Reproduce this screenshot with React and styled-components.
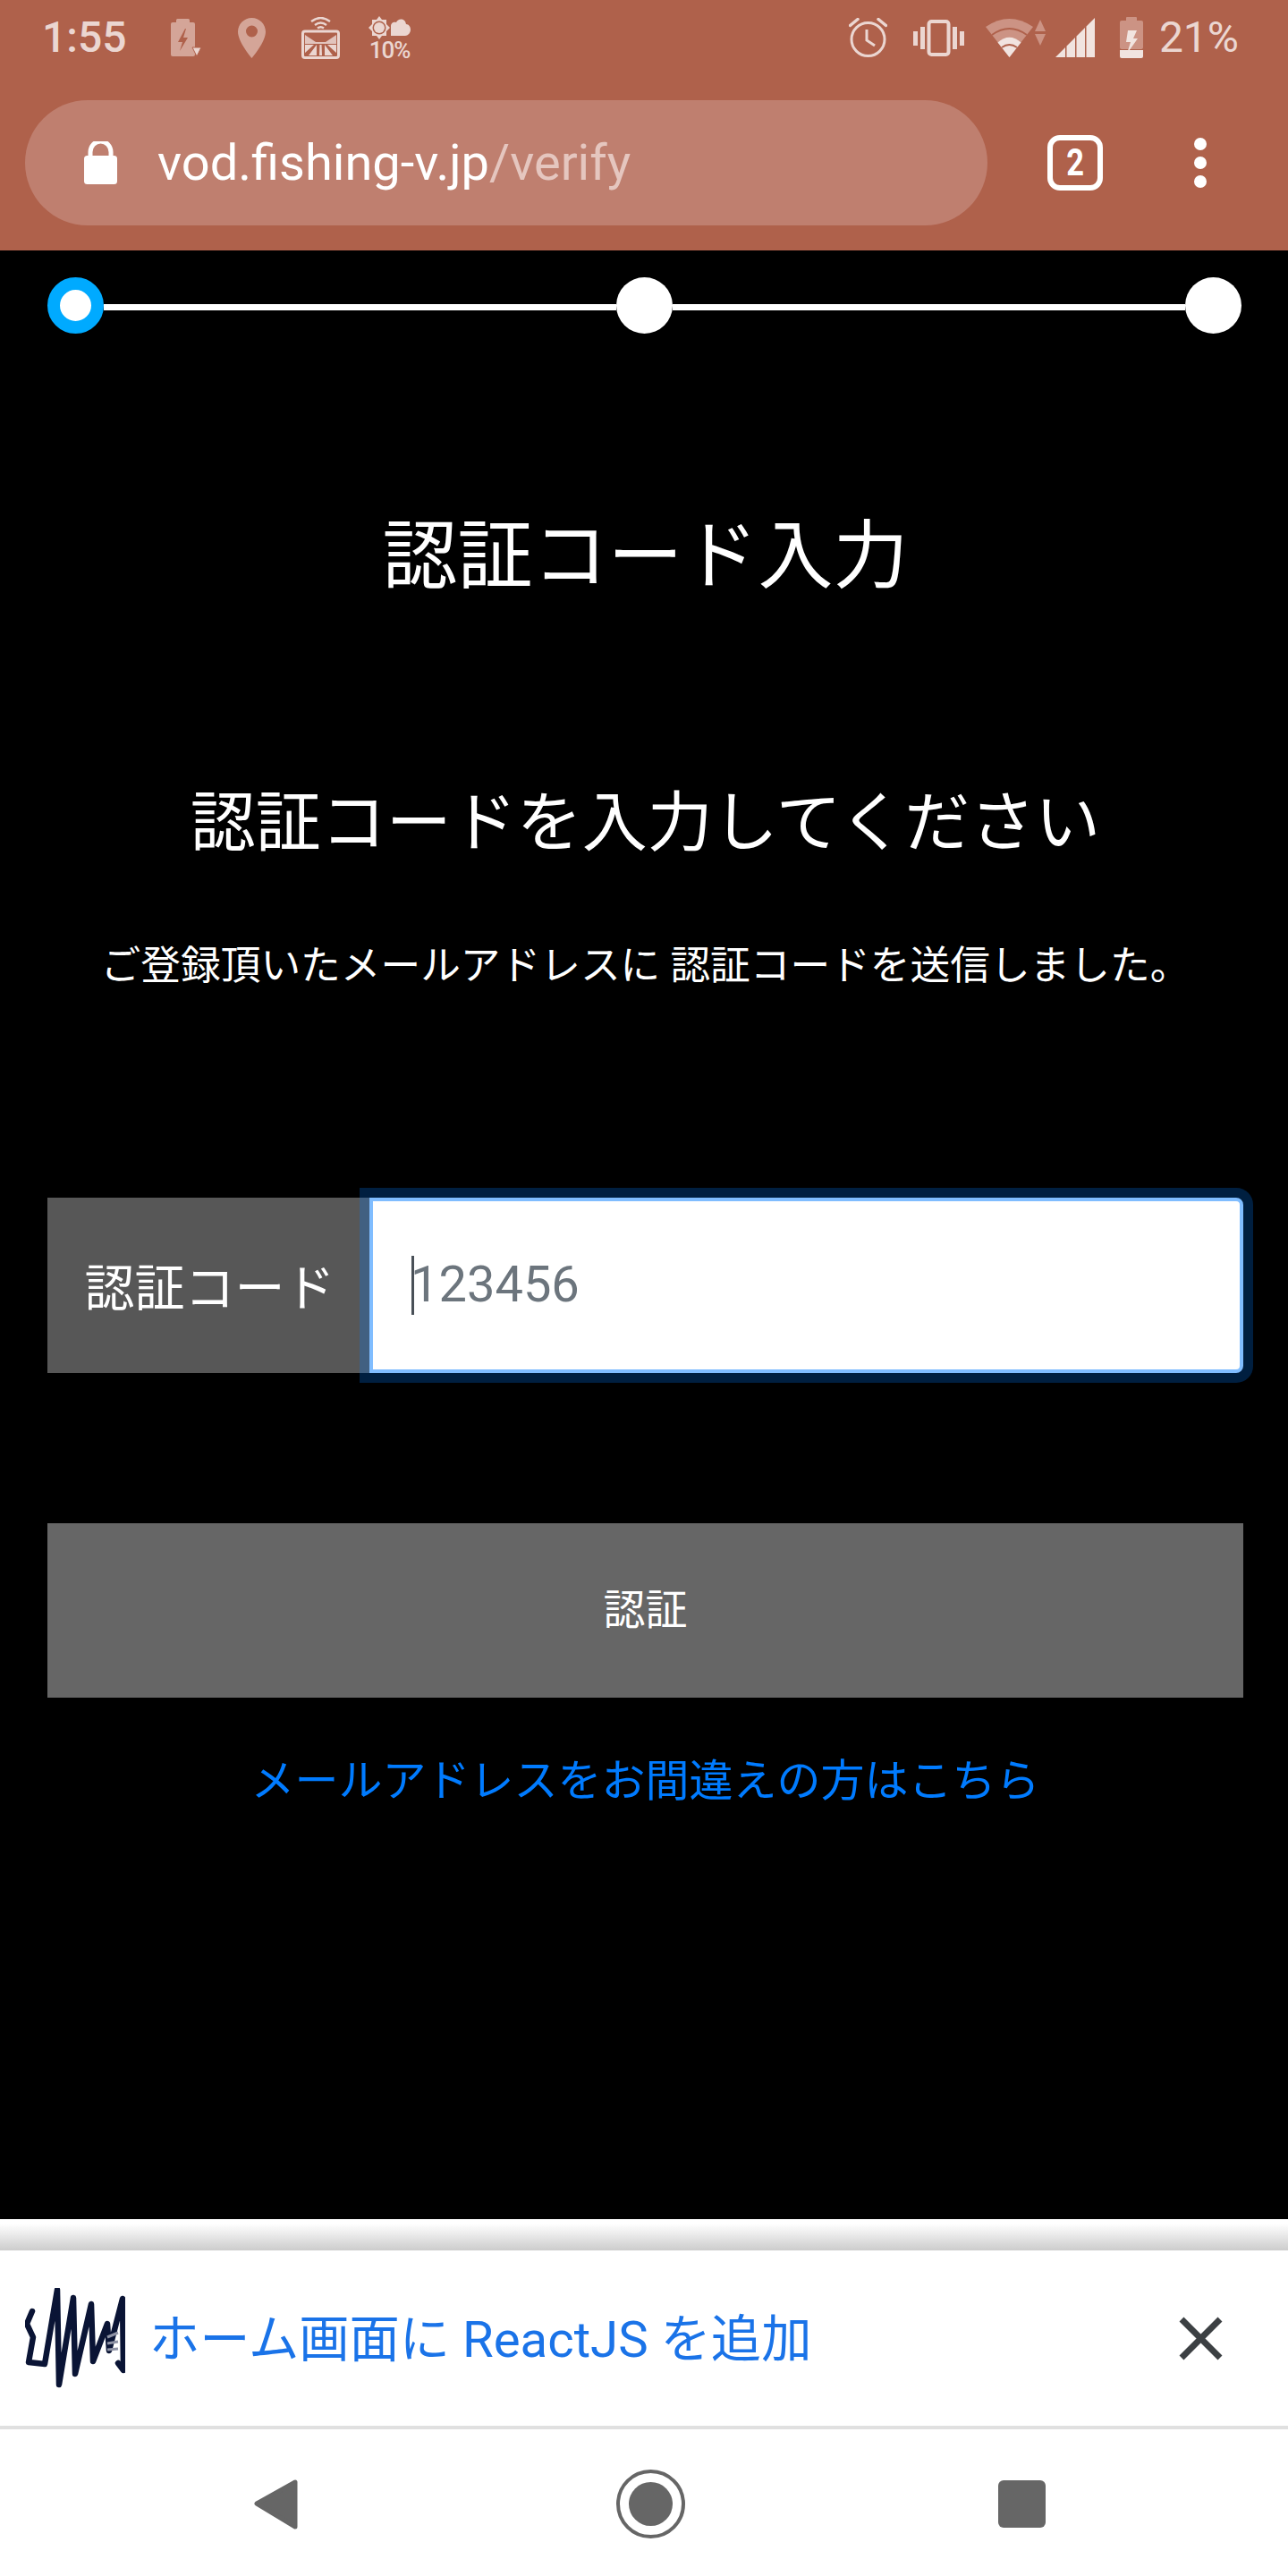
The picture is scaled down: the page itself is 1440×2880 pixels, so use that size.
import React from "react";
import styled, { createGlobalStyle } from "styled-components";

const GlobalStyle = createGlobalStyle`
  html, body {
    margin: 0;
    padding: 0;
    background: #000;
  }
  * {
    box-sizing: border-box;
  }
`;

const CJK = `"Roboto", "Noto Sans CJK JP", sans-serif`;

const Page = styled.div`
  width: 1440px;
  height: 2880px;
  display: flex;
  flex-direction: column;
  font-family: ${CJK};
  overflow: hidden;
`;

const Chrome = styled.header`
  height: 280px;
  background: #af614b;
`;

const StatusBar = styled.div`
  height: 84px;
  padding: 0 55px 0 47px;
  display: flex;
  align-items: center;
  color: #ebd6d1;
`;

const Clock = styled.span`
  font-size: 48px;
  font-weight: 500;
  line-height: 1;
  width: 92px;
  margin-right: 52px;
`;

const StatusIcon = styled.svg`
  display: block;
  flex: none;
  margin-left: ${(p) => p.$left || 0}px;
`;

const Weather = styled.div`
  width: 47px;
  margin-left: 32px;
  display: flex;
  flex-direction: column;
  align-items: center;
  margin-top: 2px;
`;

const WeatherLabel = styled.span`
  font-size: 26px;
  font-weight: 500;
  line-height: 24px;
  letter-spacing: -1px;
`;

const StatusRight = styled.div`
  margin-left: auto;
  display: flex;
  align-items: center;
`;

const Percent = styled.span`
  font-size: 48px;
  line-height: 1;
  margin-left: 18px;
`;

const Toolbar = styled.div`
  height: 196px;
  padding: 28px 0 28px 28px;
  display: flex;
  align-items: center;
`;

const UrlPill = styled.div`
  width: 1076px;
  height: 140px;
  flex: none;
  border-radius: 70px;
  background: #bf7f6f;
  padding-left: 66px;
  display: flex;
  align-items: center;
  gap: 45px;
`;

const UrlText = styled.span`
  font-size: 56px;
  line-height: 1;
  color: #fff;
  white-space: nowrap;
`;

const UrlPath = styled.span`
  color: #e5c6bf;
`;

const TabCount = styled.div`
  width: 62px;
  height: 62px;
  margin-left: 67px;
  border: 6px solid #fff;
  border-radius: 14px;
  color: #fff;
  display: flex;
  align-items: center;
  justify-content: center;
`;

const TabDigit = styled.span`
  font-size: 42px;
  font-weight: 700;
  line-height: 1;
  transform: scaleX(0.82);
`;

const Menu = styled.div`
  margin-left: 102px;
  display: flex;
  flex-direction: column;
  gap: 7px;
`;

const MenuDot = styled.span`
  width: 14px;
  height: 14px;
  border-radius: 50%;
  background: #fff;
`;

const Main = styled.main`
  flex: 1;
  background: #000;
  color: #fff;
  padding: 30px 50px 0 53px;
  text-align: center;
`;

const Steps = styled.div`
  display: flex;
  align-items: center;
  margin-right: 2px;
`;

const StepDot = styled.span`
  width: 63px;
  height: 63px;
  flex: none;
  border-radius: 50%;
  background: #fff;
  border: ${(p) => (p.$active ? "14px solid #00aaff" : "none")};
`;

const StepLine = styled.span`
  flex: 1;
  height: 7px;
  margin-top: 4px;
  background: #fff;
`;

const Title = styled.h1`
  margin: 200px 0 0;
  font-size: 84px;
  font-weight: 400;
  line-height: 100px;
`;

const SubTitle = styled.h2`
  margin: 197px 0 0;
  font-size: 73px;
  font-weight: 400;
  line-height: 100px;
`;

const Note = styled.p`
  margin: 80px 0 0;
  font-size: 44.7px;
  line-height: 60px;
  white-space: nowrap;
`;

const InputGroup = styled.div`
  margin-top: 229px;
  height: 196px;
  display: flex;
`;

const InputLabel = styled.label`
  width: 360px;
  flex: none;
  background: #575757;
  font-size: 56px;
  padding: 0 0 4px 3px;
  display: flex;
  align-items: center;
  justify-content: center;
`;

const InputWrap = styled.div`
  position: relative;
  flex: 1;
`;

const CodeInput = styled.input`
  width: 100%;
  height: 100%;
  border: 4px solid #80bdff;
  border-radius: 0 8px 8px 0;
  box-shadow: 0 0 0 11px rgba(0, 123, 255, 0.25);
  outline: none;
  background: #fff;
  padding: 0 0 2px 42px;
  font-family: "Roboto", sans-serif;
  font-size: 56px;
  color: #495057;
  caret-color: transparent;

  &::placeholder {
    color: #6c757d;
    opacity: 1;
  }
`;

const Caret = styled.span`
  position: absolute;
  left: 47px;
  top: 65px;
  width: 3px;
  height: 66px;
  background: #495057;
`;

const SubmitButton = styled.button`
  display: block;
  width: 100%;
  height: 195px;
  margin-top: 168px;
  padding: 0 0 11px;
  border: none;
  background: #666;
  color: #fff;
  font-family: ${CJK};
  font-size: 47px;
`;

const HelpLink = styled.a`
  display: block;
  margin-top: 64px;
  font-size: 49px;
  line-height: 60px;
  color: #007bff;
  text-decoration: none;
`;

const Fade = styled.div`
  height: 35px;
  background: linear-gradient(#fff 15%, #ccc);
`;

const InstallBanner = styled.div`
  height: 196px;
  background: #fff;
  padding: 0 73px 0 28px;
  display: flex;
  align-items: center;
  gap: 27px;
`;

const InstallText = styled.span`
  flex: 1;
  padding-top: 4px;
  font-size: 56.3px;
  line-height: 1;
  color: #1a73e8;
  white-space: nowrap;
`;

const Divider = styled.div`
  height: 4px;
  background: #e0e0e0;
`;

const NavBar = styled.nav`
  height: 164px;
  background: #fff;
  padding: 3px 0 0 284px;
  display: flex;
  align-items: center;
`;

const HomeRing = styled.div`
  width: 77px;
  height: 77px;
  margin-left: 356px;
  margin-right: 350px;
  border: 4px solid #666;
  border-radius: 50%;
  display: flex;
  align-items: center;
  justify-content: center;
`;

const HomeDot = styled.span`
  width: 49px;
  height: 49px;
  border-radius: 50%;
  background: #666;
`;

const RecentSquare = styled.span`
  width: 53px;
  height: 53px;
  border-radius: 6px;
  background: #666;
`;

const LIGHT = "#ebd6d1";
const DIM = "#d4a598";
const DIMMER = "#cc9384";
const BG = "#af614b";

const ChargingIcon = () => (
  <StatusIcon width="34" height="42" viewBox="0 0 34 42">
    <rect x="6" y="0" width="15" height="6" rx="1.5" fill={DIM} />
    <rect x="0" y="4" width="27" height="38" rx="2" fill={DIM} />
    <path d="M16 11 L8 26 H13 L10 36 L19 21 H14 L17 11z" fill={BG} />
    <path d="M24 32 H34 L29 42z" fill={LIGHT} stroke={BG} strokeWidth="1" />
  </StatusIcon>
);

const PinIcon = () => (
  <StatusIcon $left={41} width="31" height="45" viewBox="0 0 31 45">
    <path
      fillRule="evenodd"
      d="M15.5 0C7 0 0 7 0 15.5C0 27 15.5 45 15.5 45S31 27 31 15.5C31 7 24 0 15.5 0zM15.5 8.5a6.5 6.5 0 1 1 0 13a6.5 6.5 0 1 1 0-13z"
      fill={DIM}
    />
  </StatusIcon>
);

const RoadIcon = () => (
  <StatusIcon $left={40} width="43" height="47" viewBox="0 0 43 47">
    <path d="M11 5 Q21.5 -3 32 5" fill="none" stroke={LIGHT} strokeWidth="2.4" />
    <path d="M15 9 Q21.5 4 28 9" fill="none" stroke={LIGHT} strokeWidth="2.4" />
    <path d="M18 12.5 Q21.5 10 25 12.5" fill="none" stroke={LIGHT} strokeWidth="2.4" />
    <rect x="1.5" y="16" width="40" height="29.5" rx="2.5" fill={BG} stroke={LIGHT} strokeWidth="3" />
    <path d="M4 20 L16 28 H27 L39 20 V30 H4z" fill={LIGHT} opacity="0.85" />
    <path d="M4 31 H14 L4 40z M39 31 H29 L39 40z" fill={LIGHT} />
    <path d="M17 31 L8 43 H17z M26 31 L35 43 H26z M20.5 31 H22.5 L23 43 H20z" fill={LIGHT} />
  </StatusIcon>
);

const WeatherIcon = () => (
  <svg width="47" height="26" viewBox="0 0 47 26">
    <path
      d="M12 0 L15 4 L20 4 L20 9 L24 13 L20 17 L20 22 L15 22 L12 26 L9 22 L4 22 L4 17 L0 13 L4 9 L4 4 L9 4z"
      fill={LIGHT}
    />
    <circle cx="12" cy="13" r="7.5" fill={BG} />
    <circle cx="12" cy="13" r="6" fill={LIGHT} />
    <path
      d="M25 22 V11 C25 7 29 6 31 7 C33 2 41 2 42 9 C45 9 47 12 47 15 C47 19 44 22 41 22z"
      fill={LIGHT}
    />
  </svg>
);

const AlarmIcon = () => (
  <StatusIcon width="43" height="44" viewBox="0 0 43 44">
    <circle cx="21.5" cy="24" r="18.5" fill="none" stroke={LIGHT} strokeWidth="3" />
    <path d="M20 13 V25 L29 31" fill="none" stroke={LIGHT} strokeWidth="3" />
    <path d="M1.5 8.5 L10 1.5 M41.5 8.5 L33 1.5" fill="none" stroke={LIGHT} strokeWidth="3.5" strokeLinecap="round" />
  </StatusIcon>
);

const VibrateIcon = () => (
  <StatusIcon $left={29} width="57" height="41" viewBox="0 0 57 41">
    <rect x="17.5" y="2" width="22" height="37" rx="3" fill="none" stroke={LIGHT} strokeWidth="4" />
    <path d="M0 13 H5 V29 H0z M8 8 H13 V33 H8z M44 8 H49 V33 H44z M52 13 H57 V29 H52z" fill={LIGHT} />
  </StatusIcon>
);

const WifiIcon = () => (
  <StatusIcon $left={24} width="68" height="43" viewBox="0 0 68 43">
    <path d="M0 9 Q26.5 -9 53 9 L26.5 43z" fill={DIMMER} />
    <path d="M7 18 Q26.5 4 46 18" fill="none" stroke={BG} strokeWidth="2" />
    <path d="M13.5 26.5 Q26.5 15 39.5 26.5 L26.5 43z" fill="#f1e4e0" />
    <path d="M18 32 Q26.5 26 35 32" fill="none" stroke={BG} strokeWidth="2" />
    <path d="M61 1 L67 14 H55z" fill={DIMMER} />
    <path d="M55 17 H67 L61 30z" fill={DIMMER} />
  </StatusIcon>
);

const SignalIcon = () => (
  <StatusIcon $left={10} width="44" height="44" viewBox="0 0 44 44">
    <path d="M0 44 L11 33 V44z M12.5 31.5 L22 22 V44 H12.5z M23.5 20.5 L33 11 V44 H23.5z M34.5 9.5 L44 0 V44 H34.5z" fill="#f1e4e0" />
  </StatusIcon>
);

const BatteryIcon = () => (
  <StatusIcon $left={28} width="26" height="46" viewBox="0 0 26 46">
    <rect x="7" y="0" width="12" height="6" rx="1" fill={DIMMER} />
    <rect x="0" y="4" width="26" height="32" rx="2" fill={DIMMER} />
    <path d="M0 37 H26 V44 a2 2 0 0 1 -2 2 H2 a2 2 0 0 1 -2 -2z" fill="#f1e4e0" />
    <path d="M9 15 H19 L15 24 H20 L8 41 L12 28 H7z" fill="#f1e4e0" />
  </StatusIcon>
);

const LockIcon = () => (
  <svg width="37" height="48" viewBox="0 0 37 48" style={{ flex: "none" }}>
    <path
      d="M7 17 V12 a11.5 12 0 0 1 23 0 V17"
      fill="none"
      stroke="#fff"
      strokeWidth="5"
    />
    <rect x="0" y="16" width="37" height="32" rx="3.5" fill="#fff" />
  </svg>
);

const AppLogo = () => (
  <svg width="112" height="112" viewBox="0 0 112 112" style={{ flex: "none" }}>
    <path
      d="M8 26 L2 40 L9 55 L4 83 L22 85 L36 2 L38 108 L54 11 L56 96 L74 18 L76 82 L92 40 L94 70 L109 12 L110 92 L104 84"
      fill="none"
      stroke="#0a1435"
      strokeWidth="6.5"
      strokeLinejoin="round"
      strokeLinecap="round"
    />
    <path d="M92 55 L104 50 M92 62 L104 60 M92 69 L104 68" stroke="#8f93a5" strokeWidth="3" fill="none" />
  </svg>
);

const CloseIcon = () => (
  <svg width="49" height="49" viewBox="0 0 49 49" style={{ display: "block", flex: "none" }}>
    <path d="M3 3 L46 46 M46 3 L3 46" stroke="#3c4043" strokeWidth="7" fill="none" />
  </svg>
);

const BackIcon = () => (
  <svg width="49" height="56" viewBox="0 0 49 56" style={{ display: "block", flex: "none" }}>
    <path d="M46 3 V53 L3 27z" fill="#666" stroke="#666" strokeWidth="5" strokeLinejoin="round" />
  </svg>
);

const App = () => {
  return (
    <Page>
      <GlobalStyle />
      <Chrome>
        <StatusBar>
          <Clock>1:55</Clock>
          <ChargingIcon />
          <PinIcon />
          <RoadIcon />
          <Weather>
            <WeatherIcon />
            <WeatherLabel>10%</WeatherLabel>
          </Weather>
          <StatusRight>
            <AlarmIcon />
            <VibrateIcon />
            <WifiIcon />
            <SignalIcon />
            <BatteryIcon />
            <Percent>21%</Percent>
          </StatusRight>
        </StatusBar>
        <Toolbar>
          <UrlPill>
            <LockIcon />
            <UrlText>
              vod.fishing-v.jp<UrlPath>/verify</UrlPath>
            </UrlText>
          </UrlPill>
          <TabCount>
            <TabDigit>2</TabDigit>
          </TabCount>
          <Menu>
            <MenuDot />
            <MenuDot />
            <MenuDot />
          </Menu>
        </Toolbar>
      </Chrome>
      <Main>
        <Steps>
          <StepDot $active />
          <StepLine />
          <StepDot />
          <StepLine />
          <StepDot />
        </Steps>
        <Title>認証コード入力</Title>
        <SubTitle>認証コードを入力してください</SubTitle>
        <Note>ご登録頂いたメールアドレスに 認証コードを送信しました。</Note>
        <InputGroup>
          <InputLabel>認証コード</InputLabel>
          <InputWrap>
            <CodeInput placeholder="123456" readOnly />
            <Caret />
          </InputWrap>
        </InputGroup>
        <SubmitButton>認証</SubmitButton>
        <HelpLink href="#">メールアドレスをお間違えの方はこちら</HelpLink>
      </Main>
      <Fade />
      <InstallBanner>
        <AppLogo />
        <InstallText>ホーム画面に ReactJS を追加</InstallText>
        <CloseIcon />
      </InstallBanner>
      <Divider />
      <NavBar>
        <BackIcon />
        <HomeRing>
          <HomeDot />
        </HomeRing>
        <RecentSquare />
      </NavBar>
    </Page>
  );
};

export default App;
